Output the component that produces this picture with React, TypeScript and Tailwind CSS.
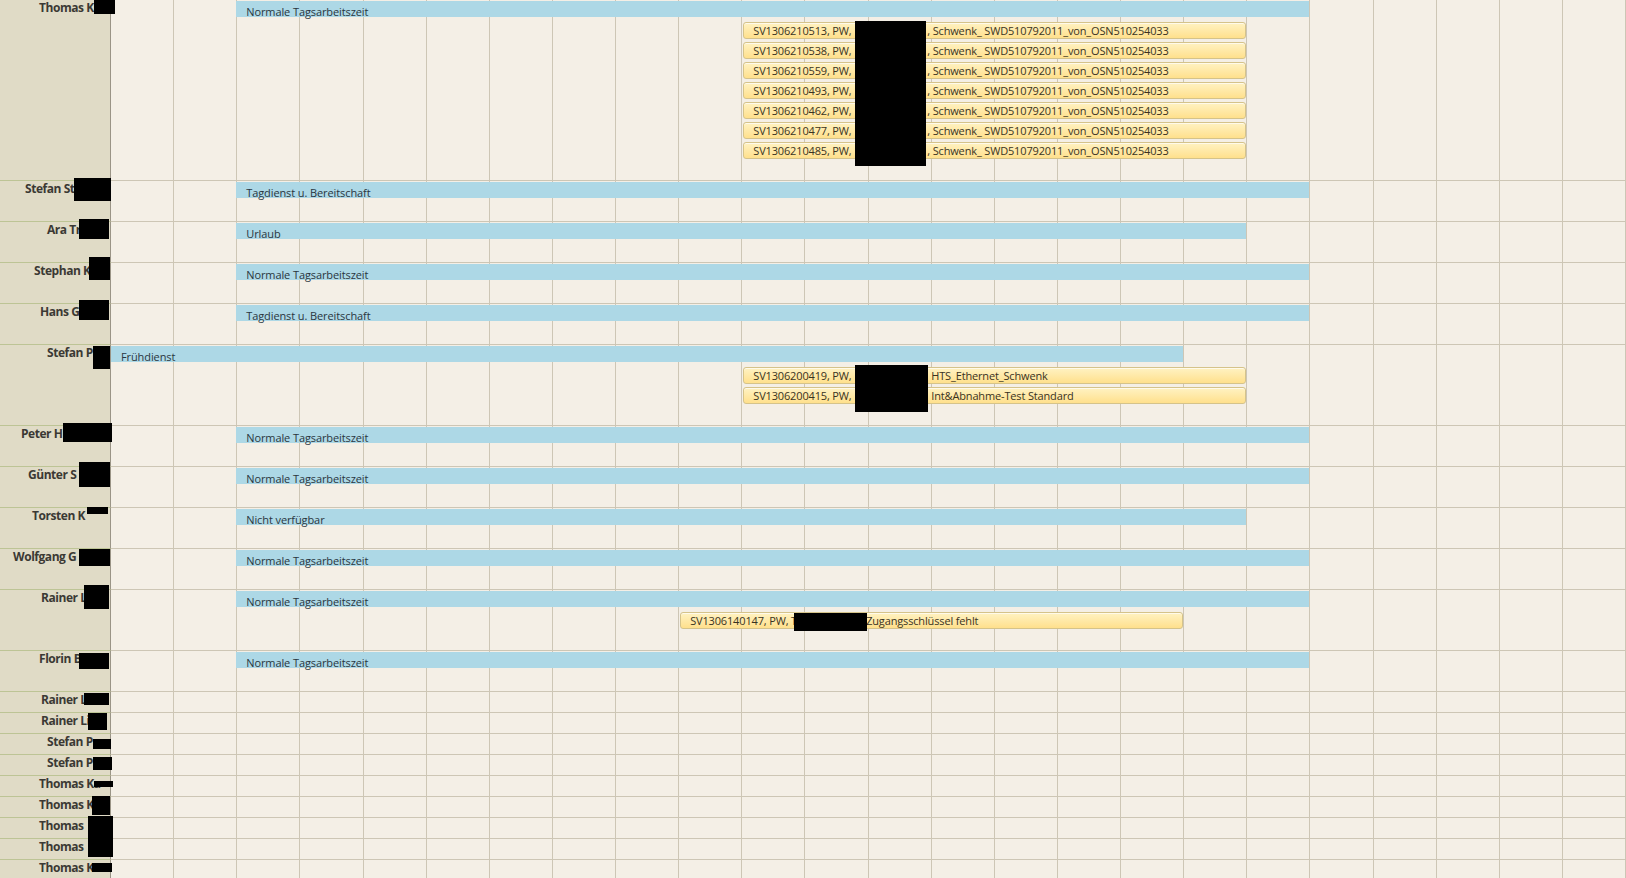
import React from 'react';

type Bar = {
  kind: 'shift' | 'task';
  start: number; // grid line where the bar begins (1-based)
  end: number; // grid line where the bar ends
  text: string;
  tail?: string; // text shown after the masked customer field
  lead?: number; // width reserved for the first text part
};

type Mask = { x: number; y: number; w: number; h: number };

interface Resource {
  name: string;
  indent: number;
  lanes: Bar[];
  masks: Mask[];
}

const COLUMNS = 24;

const task = (id: string, tail: string, lead = 174, start = 11, end = 19, prefix = ', '): Bar => ({
  kind: 'task',
  start,
  end,
  text: `${id}, PW, `,
  tail: `${prefix}${tail}`,
  lead,
});

const schwenk = (id: string) => task(id, 'Schwenk_ SWD510792011_von_OSN510254033');

const shift = (text: string, start = 3, end = 20): Bar => ({ kind: 'shift', start, end, text });

const resources: Resource[] = [
  {
    name: 'Thomas K',
    indent: 39,
    lanes: [
      shift('Normale Tagsarbeitszeit'),
      schwenk('SV1306210513'),
      schwenk('SV1306210538'),
      schwenk('SV1306210559'),
      schwenk('SV1306210493'),
      schwenk('SV1306210462'),
      schwenk('SV1306210477'),
      schwenk('SV1306210485'),
    ],
    masks: [
      { x: 94, y: 0, w: 21, h: 14 },
      { x: 855, y: 21, w: 71, h: 145 },
    ],
  },
  { name: 'Stefan St', indent: 25, lanes: [shift('Tagdienst u. Bereitschaft')], masks: [{ x: 74, y: -3, w: 37, h: 23 }] },
  { name: 'Ara Tr', indent: 47, lanes: [shift('Urlaub', 3, 19)], masks: [{ x: 79, y: -3, w: 30, h: 20 }] },
  { name: 'Stephan K', indent: 34, lanes: [shift('Normale Tagsarbeitszeit')], masks: [{ x: 89, y: -6, w: 21, h: 23 }] },
  { name: 'Hans G', indent: 40, lanes: [shift('Tagdienst u. Bereitschaft')], masks: [{ x: 79, y: -4, w: 30, h: 20 }] },
  {
    name: 'Stefan P',
    indent: 47,
    lanes: [
      shift('Frühdienst', 1, 18),
      task('SV1306200419', 'HTS_Ethernet_Schwenk', 178, 11, 19, ''),
      task('SV1306200415', 'Int&Abnahme-Test Standard', 178, 11, 19, ''),
    ],
    masks: [
      { x: 93, y: 1, w: 17, h: 23 },
      { x: 855, y: 20, w: 73, h: 47 },
    ],
  },
  { name: 'Peter H', indent: 21, lanes: [shift('Normale Tagsarbeitszeit')], masks: [{ x: 63, y: -3, w: 49, h: 19 }] },
  { name: 'Günter S', indent: 28, lanes: [shift('Normale Tagsarbeitszeit')], masks: [{ x: 79, y: -5, w: 31, h: 25 }] },
  { name: 'Torsten K', indent: 32, lanes: [shift('Nicht verfügbar', 3, 19)], masks: [{ x: 87, y: -1, w: 21, h: 7 }] },
  { name: 'Wolfgang G', indent: 13, lanes: [shift('Normale Tagsarbeitszeit')], masks: [{ x: 79, y: 0, w: 31, h: 17 }] },
  {
    name: 'Rainer L',
    indent: 41,
    lanes: [
      shift('Normale Tagsarbeitszeit'),
      {
        kind: 'task',
        start: 10,
        end: 18,
        text: 'SV1306140147, PW, T',
        tail: 'Zugangsschlüssel fehlt',
        lead: 176,
      },
    ],
    masks: [
      { x: 84, y: -5, w: 25, h: 24 },
      { x: 794, y: 23, w: 73, h: 18 },
    ],
  },
  { name: 'Florin B', indent: 39, lanes: [shift('Normale Tagsarbeitszeit')], masks: [{ x: 79, y: 2, w: 30, h: 16 }] },
  { name: 'Rainer L', indent: 41, lanes: [], masks: [{ x: 84, y: 1, w: 25, h: 12 }] },
  { name: 'Rainer Li', indent: 41, lanes: [], masks: [{ x: 88, y: 0, w: 19, h: 17 }] },
  { name: 'Stefan P', indent: 47, lanes: [], masks: [{ x: 93, y: 5, w: 18, h: 10 }] },
  { name: 'Stefan P', indent: 47, lanes: [], masks: [{ x: 93, y: 2, w: 19, h: 13 }] },
  { name: 'Thomas Ka', indent: 39, lanes: [], masks: [{ x: 94, y: 5, w: 19, h: 6 }] },
  { name: 'Thomas K', indent: 39, lanes: [], masks: [{ x: 92, y: -1, w: 18, h: 19 }] },
  { name: 'Thomas', indent: 39, lanes: [], masks: [{ x: 88, y: -2, w: 25, h: 23 }] },
  { name: 'Thomas', indent: 39, lanes: [], masks: [{ x: 88, y: 0, w: 25, h: 18 }] },
  { name: 'Thomas K', indent: 39, lanes: [], masks: [{ x: 92, y: 3, w: 20, h: 9 }] },
];

const BarItem: React.FC<{ bar: Bar }> = ({ bar }) => {
  const gridColumn = `${bar.start} / ${bar.end}`;

  if (bar.kind === 'shift') {
    return (
      <div
        style={{ gridColumn }}
        className={`mt-px mr-px h-4 overflow-visible whitespace-nowrap bg-[#add8e6] pl-[10px] pt-[3px] text-[11px] leading-4 tracking-[-0.1px] text-[#2a3640] ${
          bar.start === 1 ? 'ml-0' : 'ml-[-1px]'
        }`}
      >
        {bar.text}
      </div>
    );
  }

  return (
    <div
      style={{ gridColumn }}
      className="mx-px mt-[2px] flex h-[17px] items-start overflow-hidden whitespace-nowrap rounded-[3px] border border-[#d5c38a] bg-linear-to-b from-[#fff2c2] to-[#ffe08c] pl-[9px] text-[11px] leading-4 tracking-[-0.15px] text-[#3a3322] shadow-[inset_0_1px_0_#fffaea]"
    >
      <span className="inline-block shrink-0" style={{ width: bar.lead }}>
        {bar.text}
      </span>
      <span>{bar.tail}</span>
    </div>
  );
};

const ResourceRow: React.FC<{ resource: Resource }> = ({ resource }) => (
  <div className="relative flex">
    <div
      className="w-[111px] shrink-0 overflow-hidden whitespace-nowrap border-r border-b border-r-[#9a9486] border-b-[#bdc495] bg-[#e0dbc6] pt-[1px] text-[12px] font-bold leading-[14px] tracking-[-0.45px] text-[#3b3934]"
      style={{ paddingLeft: resource.indent }}
    >
      {resource.name}
    </div>

    <div className="grid flex-1 border-b border-[#cdc6b5]">
      {/* column grid behind the bars */}
      <div className="col-start-1 row-start-1 grid grid-cols-24">
        {Array.from({ length: COLUMNS }).map((_, i) => (
          <div key={i} className="border-r border-[#cdc6b5]" />
        ))}
      </div>

      <div className="col-start-1 row-start-1 flex flex-col pb-5">
        {resource.lanes.map((bar, i) => (
          <div key={i} className="grid h-5 grid-cols-24">
            <BarItem bar={bar} />
          </div>
        ))}
      </div>
    </div>

    {resource.masks.map((m, i) => (
      <div
        key={i}
        className="absolute z-10 bg-black"
        style={{ left: m.x, top: m.y, width: m.w, height: m.h }}
      />
    ))}
  </div>
);

export default function App() {
  return (
    <div className="h-[878px] w-full overflow-hidden bg-[#f4efe6] font-['Open_Sans','Noto_Sans',sans-serif]">
      {resources.map((r, i) => (
        <ResourceRow key={i} resource={r} />
      ))}
    </div>
  );
}
